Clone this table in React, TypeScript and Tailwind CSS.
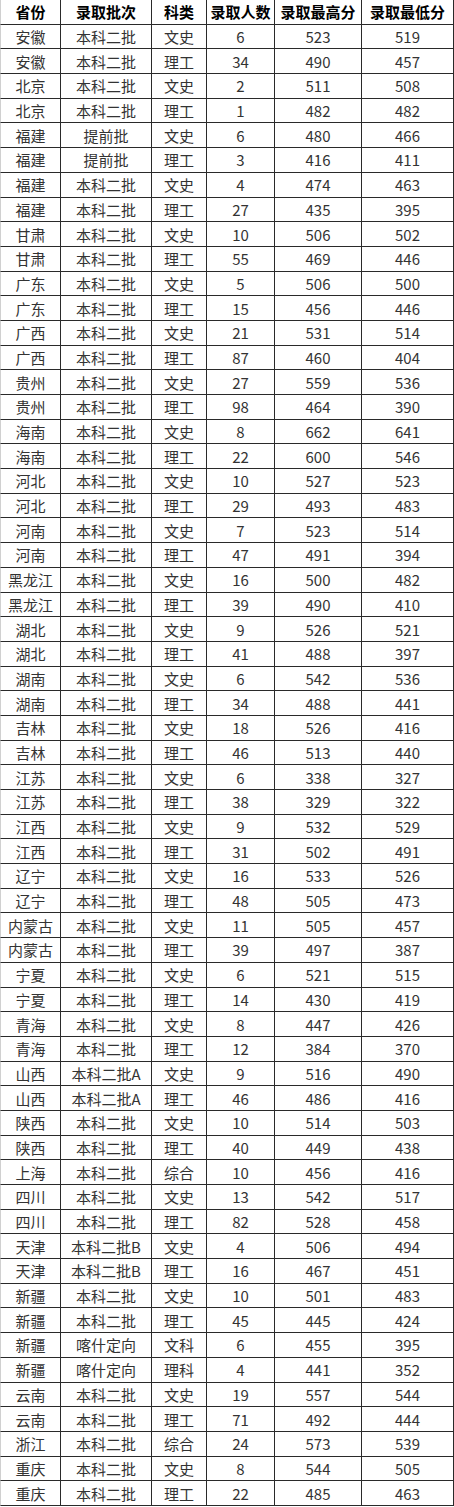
import React from 'react'

const header = ['省份', '录取批次', '科类', '录取人数', '录取最高分', '录取最低分']

const raw = `安徽 本科二批 文史 6 523 519
安徽 本科二批 理工 34 490 457
北京 本科二批 文史 2 511 508
北京 本科二批 理工 1 482 482
福建 提前批 文史 6 480 466
福建 提前批 理工 3 416 411
福建 本科二批 文史 4 474 463
福建 本科二批 理工 27 435 395
甘肃 本科二批 文史 10 506 502
甘肃 本科二批 理工 55 469 446
广东 本科二批 文史 5 506 500
广东 本科二批 理工 15 456 446
广西 本科二批 文史 21 531 514
广西 本科二批 理工 87 460 404
贵州 本科二批 文史 27 559 536
贵州 本科二批 理工 98 464 390
海南 本科二批 文史 8 662 641
海南 本科二批 理工 22 600 546
河北 本科二批 文史 10 527 523
河北 本科二批 理工 29 493 483
河南 本科二批 文史 7 523 514
河南 本科二批 理工 47 491 394
黑龙江 本科二批 文史 16 500 482
黑龙江 本科二批 理工 39 490 410
湖北 本科二批 文史 9 526 521
湖北 本科二批 理工 41 488 397
湖南 本科二批 文史 6 542 536
湖南 本科二批 理工 34 488 441
吉林 本科二批 文史 18 526 416
吉林 本科二批 理工 46 513 440
江苏 本科二批 文史 6 338 327
江苏 本科二批 理工 38 329 322
江西 本科二批 文史 9 532 529
江西 本科二批 理工 31 502 491
辽宁 本科二批 文史 16 533 526
辽宁 本科二批 理工 48 505 473
内蒙古 本科二批 文史 11 505 457
内蒙古 本科二批 理工 39 497 387
宁夏 本科二批 文史 6 521 515
宁夏 本科二批 理工 14 430 419
青海 本科二批 文史 8 447 426
青海 本科二批 理工 12 384 370
山西 本科二批A 文史 9 516 490
山西 本科二批A 理工 46 486 416
陕西 本科二批 文史 10 514 503
陕西 本科二批 理工 40 449 438
上海 本科二批 综合 10 456 416
四川 本科二批 文史 13 542 517
四川 本科二批 理工 82 528 458
天津 本科二批B 文史 4 506 494
天津 本科二批B 理工 16 467 451
新疆 本科二批 文史 10 501 483
新疆 本科二批 理工 45 445 424
新疆 喀什定向 文科 6 455 395
新疆 喀什定向 理科 4 441 352
云南 本科二批 文史 19 557 544
云南 本科二批 理工 71 492 444
浙江 本科二批 综合 24 573 539
重庆 本科二批 文史 8 544 505
重庆 本科二批 理工 22 485 463`

const rows = raw.split('\n').map((line) => line.split(' '))

const Cell = ({ children, bold, first }: { children: React.ReactNode; bold?: boolean; first?: boolean }) => (
  <div
    className={`flex items-center justify-center border-b border-r border-[#2a2a2a] text-[15px] leading-none ${
      first ? 'border-l border-l-[#d0d0d0]' : ''
    } ${bold ? 'font-bold text-black' : 'text-[#333]'}`}
  >
    {children}
  </div>
)

const App = () => {
  return (
    <div
      className="w-[454px] bg-white"
      style={{ fontFamily: '"Noto Sans CJK SC", "Liberation Sans", sans-serif' }}
    >
      <div className="grid grid-cols-[61px_91px_55px_68px_87px_92px] auto-rows-[24.7px]">
        {header.map((h, i) => (
          <Cell key={h} bold first={i === 0}>
            {h}
          </Cell>
        ))}
        {rows.map((r, ri) =>
          r.map((c, ci) => (
            <Cell key={`${ri}-${ci}`} first={ci === 0}>
              {c}
            </Cell>
          ))
        )}
      </div>
    </div>
  )
}

export default App
